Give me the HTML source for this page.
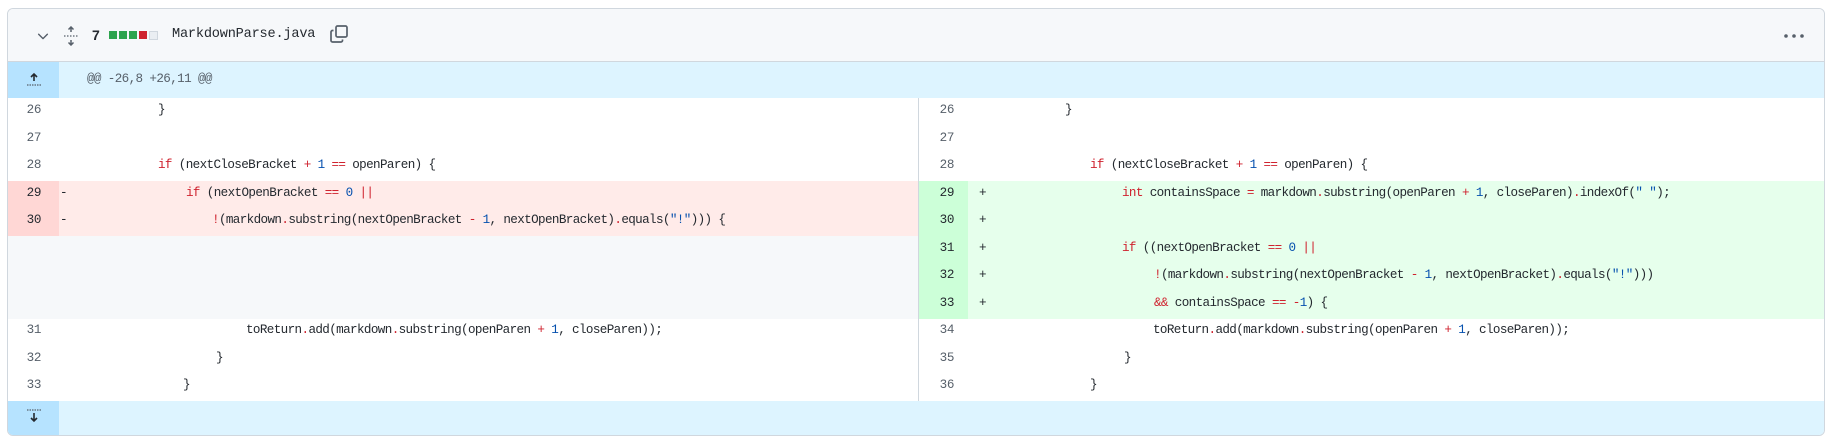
<!DOCTYPE html>
<html><head><meta charset="utf-8"><style>
body{margin:0;background:#fff;width:1833px;height:444px;overflow:hidden;position:relative;font-family:"Liberation Mono",monospace;}
.box{position:absolute;left:7px;top:8px;width:1818px;height:428px;border:1px solid #d0d7de;border-radius:6px;overflow:hidden;box-sizing:border-box;background:#fff}
.hdr{position:absolute;left:0;top:0;width:100%;height:53px;background:#f6f8fa;border-bottom:1px solid #d0d7de;box-sizing:border-box}
.abs{position:absolute}
.row{position:absolute;height:27.5px;line-height:27.5px;font-size:12.6px;letter-spacing:-0.62px;color:#24292f;white-space:pre}
.ln{position:absolute;height:27.5px;line-height:27.5px;font-size:12.6px;letter-spacing:-0.4px;color:#57606a;text-align:right}
.k{color:#cf222e}.n{color:#0550ae}
</style></head><body>
<div class="box">
 <div class="hdr">
  <svg class="abs" style="left:28px;top:20px" width="14" height="14" viewBox="0 0 16 16"><path d="M3 6l5 5 5-5" fill="none" stroke="#57606a" stroke-width="1.6" stroke-linecap="round" stroke-linejoin="round"/></svg>
  <svg class="abs" style="left:55px;top:17px" width="16" height="20" viewBox="0 0 16 20"><path d="M8 1v5M5.5 3.5L8 1l2.5 2.5M8 19v-5M5.5 16.5L8 19l2.5-2.5" fill="none" stroke="#57606a" stroke-width="1.5"/><path d="M1 10h14" stroke="#57606a" stroke-width="1.2" stroke-dasharray="1.5 1.5"/></svg>
  <div class="abs" style="left:84px;top:16px;font:bold 14px 'Liberation Sans',sans-serif;color:#24292f;line-height:20px">7</div>
  <div class="abs" style="left:101px;top:22px;width:8px;height:8px;background:#2da44e"></div>
  <div class="abs" style="left:111px;top:22px;width:8px;height:8px;background:#2da44e"></div>
  <div class="abs" style="left:121px;top:22px;width:8px;height:8px;background:#2da44e"></div>
  <div class="abs" style="left:131px;top:22px;width:8px;height:8px;background:#cf222e"></div>
  <div class="abs" style="left:141px;top:22px;width:7px;height:7px;background:#eaeef2;border:0.5px solid #d0d7de"></div>
  <div class="abs" style="left:164px;top:16px;font-size:13.6px;letter-spacing:-0.2px;color:#24292f;line-height:20px">MarkdownParse.java</div>
  <svg class="abs" style="left:321px;top:15px" width="20" height="20" viewBox="0 0 20 20"><rect x="7" y="2" width="11" height="11" rx="1.5" fill="none" stroke="#57606a" stroke-width="1.7"/><path d="M4.5 6.5H3.5a1.5 1.5 0 0 0-1.5 1.5v8.5a1.5 1.5 0 0 0 1.5 1.5H12a1.5 1.5 0 0 0 1.5-1.5v-1" fill="none" stroke="#57606a" stroke-width="1.7"/></svg>
  <svg class="abs" style="left:1775px;top:24px" width="22" height="6"><circle cx="3" cy="3" r="1.8" fill="#57606a"/><circle cx="11" cy="3" r="1.8" fill="#57606a"/><circle cx="19" cy="3" r="1.8" fill="#57606a"/></svg>
 </div>
 <div class="abs" style="left:0;top:53px;width:100%;height:36px;background:#ddf4ff"></div>
 <div class="abs" style="left:0;top:53px;width:51px;height:36px;background:#b6e3ff"></div>
 <svg class="abs" style="left:17px;top:62px" width="18" height="16"><path d="M9 10V3M6 6l3-3 3 3" fill="none" stroke="#24292f" stroke-width="1.6"/><path d="M2 14h14" stroke="#57606a" stroke-width="1.2" stroke-dasharray="1.5 1"/></svg>
 <div class="row" style="left:79px;top:57px;color:#57606a">@@ -26,8 +26,11 @@</div>
 <div class="abs" style="left:0;top:392px;width:100%;height:36px;background:#ddf4ff"></div>
 <div class="abs" style="left:0;top:392px;width:51px;height:36px;background:#b6e3ff"></div>
 <svg class="abs" style="left:17px;top:399px" width="18" height="16"><path d="M2 2h14" stroke="#57606a" stroke-width="1.2" stroke-dasharray="1.5 1"/><path d="M9 5v8M6 10l3 3 3-3" fill="none" stroke="#24292f" stroke-width="1.6"/></svg>
 <div class="abs" style="left:0;top:172px;width:911px;height:55px;background:#ffebe9"></div>
 <div class="abs" style="left:0;top:172px;width:51px;height:55px;background:#ffd7d5"></div>
 <div class="abs" style="left:0;top:227px;width:911px;height:82.5px;background:#f6f8fa"></div>
 <div class="abs" style="left:911px;top:172px;width:907px;height:137.5px;background:#e6ffec"></div>
 <div class="abs" style="left:911px;top:172px;width:49px;height:137.5px;background:#ccffd8"></div>
 <div class="abs" style="left:910px;top:89px;width:1px;height:303px;background:#d0d7de"></div>
</div>
<div class="ln" style="left:8px;width:33px;top:97px">26</div>
<div class="ln" style="left:8px;width:33px;top:124.5px">27</div>
<div class="ln" style="left:8px;width:33px;top:152px">28</div>
<div class="ln" style="left:8px;width:33px;top:179.5px;color:#24292f">29</div>
<div class="ln" style="left:8px;width:33px;top:207px;color:#24292f">30</div>
<div class="ln" style="left:8px;width:33px;top:317px">31</div>
<div class="ln" style="left:8px;width:33px;top:344.5px">32</div>
<div class="ln" style="left:8px;width:33px;top:372px">33</div>
<div class="row" style="left:158px;top:97px">}</div>
<div class="row" style="left:158px;top:152px"><span class="k">if</span> (nextCloseBracket <span class="k">+</span> <span class="n">1</span> <span class="k">==</span> openParen) {</div>
<div class="row" style="left:60px;top:179.5px">-</div>
<div class="row" style="left:186px;top:179.5px"><span class="k">if</span> (nextOpenBracket <span class="k">==</span> <span class="n">0</span> <span class="k">||</span></div>
<div class="row" style="left:60px;top:207px">-</div>
<div class="row" style="left:212px;top:207px"><span class="k">!</span>(markdown<span class="k">.</span>substring(nextOpenBracket <span class="k">-</span> <span class="n">1</span>, nextOpenBracket)<span class="k">.</span>equals(<span class="n">"!"</span>))) {</div>
<div class="row" style="left:246px;top:317px">toReturn<span class="k">.</span>add(markdown<span class="k">.</span>substring(openParen <span class="k">+</span> <span class="n">1</span>, closeParen));</div>
<div class="row" style="left:216px;top:344.5px">}</div>
<div class="row" style="left:183px;top:372px">}</div>
<div class="ln" style="left:920px;width:34px;top:97px">26</div>
<div class="ln" style="left:920px;width:34px;top:124.5px">27</div>
<div class="ln" style="left:920px;width:34px;top:152px">28</div>
<div class="ln" style="left:920px;width:34px;top:179.5px;color:#24292f">29</div>
<div class="ln" style="left:920px;width:34px;top:207px;color:#24292f">30</div>
<div class="ln" style="left:920px;width:34px;top:234.5px;color:#24292f">31</div>
<div class="ln" style="left:920px;width:34px;top:262px;color:#24292f">32</div>
<div class="ln" style="left:920px;width:34px;top:289.5px;color:#24292f">33</div>
<div class="ln" style="left:920px;width:34px;top:317px">34</div>
<div class="ln" style="left:920px;width:34px;top:344.5px">35</div>
<div class="ln" style="left:920px;width:34px;top:372px">36</div>
<div class="row" style="left:1065px;top:97px">}</div>
<div class="row" style="left:1090px;top:152px"><span class="k">if</span> (nextCloseBracket <span class="k">+</span> <span class="n">1</span> <span class="k">==</span> openParen) {</div>
<div class="row" style="left:979px;top:179.5px">+</div>
<div class="row" style="left:1122px;top:179.5px"><span class="k">int</span> containsSpace <span class="k">=</span> markdown<span class="k">.</span>substring(openParen <span class="k">+</span> <span class="n">1</span>, closeParen)<span class="k">.</span>indexOf(<span class="n">" "</span>);</div>
<div class="row" style="left:979px;top:207px">+</div>
<div class="row" style="left:979px;top:234.5px">+</div>
<div class="row" style="left:1122px;top:234.5px"><span class="k">if</span> ((nextOpenBracket <span class="k">==</span> <span class="n">0</span> <span class="k">||</span></div>
<div class="row" style="left:979px;top:262px">+</div>
<div class="row" style="left:1154px;top:262px"><span class="k">!</span>(markdown<span class="k">.</span>substring(nextOpenBracket <span class="k">-</span> <span class="n">1</span>, nextOpenBracket)<span class="k">.</span>equals(<span class="n">"!"</span>)))</div>
<div class="row" style="left:979px;top:289.5px">+</div>
<div class="row" style="left:1154px;top:289.5px"><span class="k">&amp;&amp;</span> containsSpace <span class="k">==</span> <span class="k">-</span><span class="n">1</span>) {</div>
<div class="row" style="left:1153px;top:317px">toReturn<span class="k">.</span>add(markdown<span class="k">.</span>substring(openParen <span class="k">+</span> <span class="n">1</span>, closeParen));</div>
<div class="row" style="left:1124px;top:344.5px">}</div>
<div class="row" style="left:1090px;top:372px">}</div>
</body></html>
